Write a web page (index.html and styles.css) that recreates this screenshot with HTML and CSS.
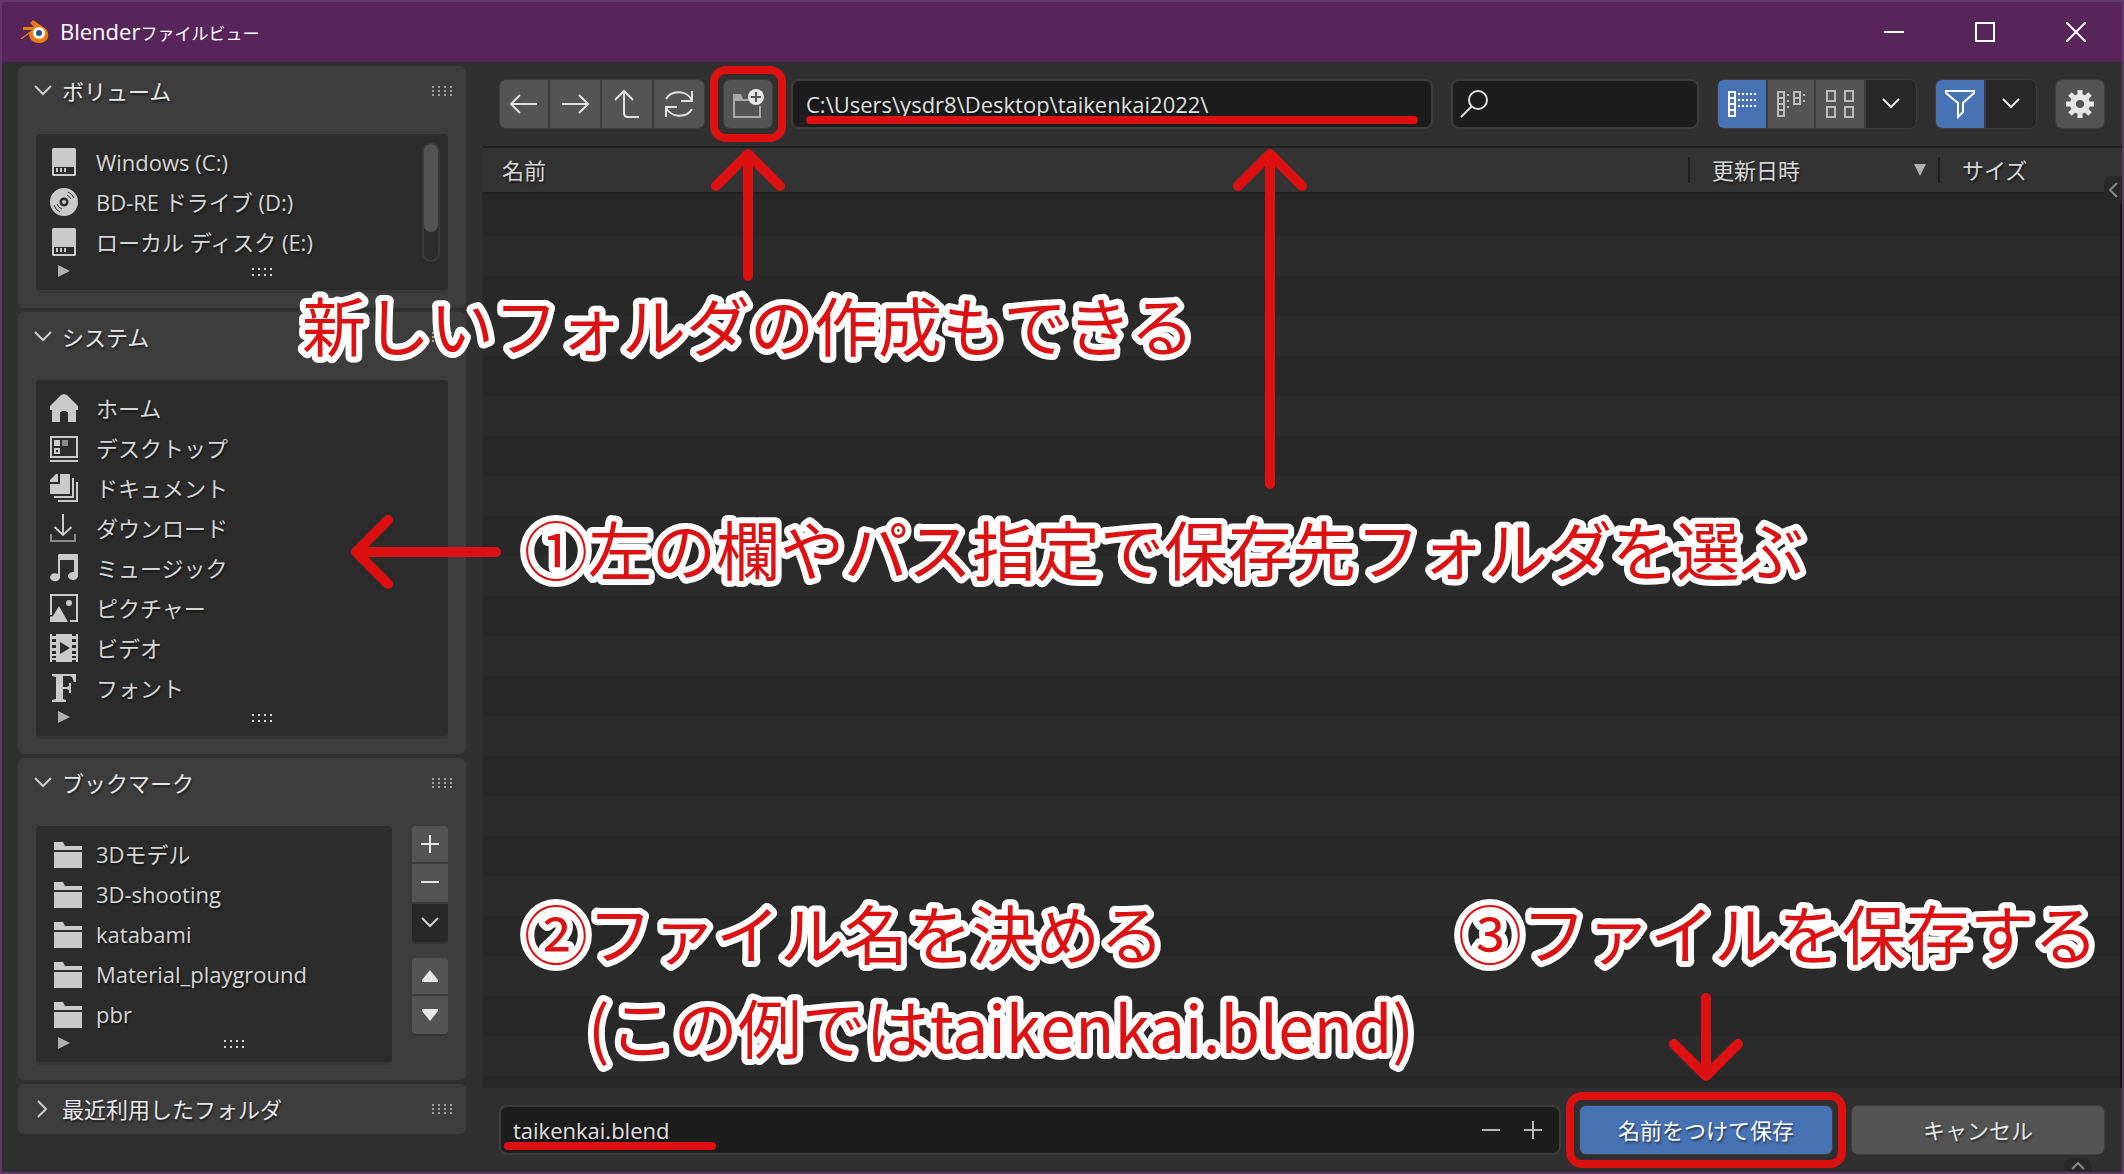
FILE: index.html
```html
<!DOCTYPE html>
<html lang="ja">
<head>
<meta charset="utf-8">
<title>Blenderファイルビュー</title>
<link rel="stylesheet" href="styles.css">
</head>
<body>
<svg class="defs" aria-hidden="true">
  <symbol id="drive" viewBox="0 0 28 28"><path fill-rule="evenodd" d="M3 0h22l1 1v26l-1 1H3l-1-1V1zM4 19v7h20v-7z"/><path d="M6 20h2v4H6zM10 20h2v4h-2zM14 20h2v4h-2z"/></symbol>
  <symbol id="disc" viewBox="0 0 28 28"><path fill-rule="evenodd" d="M14 0a14 14 0 1 1 0 28a14 14 0 0 1 0-28zM14 9.500a4.500 4.500 0 1 0 0 9a4.500 4.500 0 0 0 0-9z"/><circle cx="14" cy="14" r="2"/><path d="M18 4a11 11 0 0 1 6 6M17 7a8 8 0 0 1 4 4M4 17a11 11 0 0 0 6 7M7 16a8 8 0 0 0 5 5" fill="none" stroke="#2c2c2c" stroke-width="1"/></symbol>
  <symbol id="home" viewBox="0 0 28 28"><path d="M14 0l3 1 11 11v4h-2v12h-8V18h-1l-1-1h-4l-1 1h-1v10H2V16H0v-4L11 1z"/></symbol>
  <symbol id="desktop" viewBox="0 0 28 28"><path fill-rule="evenodd" d="M0 2h28v22H0zM2 4v18h24V4zM0 26h28v2H0zM4 6h6v6H4zM4 14h6v6H4zM6 16v2h2v-2z"/><path opacity=".6" d="M12 6h6v6h-6z"/></symbol>
  <symbol id="docs" viewBox="0 0 28 28"><path d="M10 0h10v20H0V10h10zM0 8V6l6-6h2v8zM22 4h2v20H4v-2h18zM26 8h2v20H8v-2h18z"/></symbol>
  <symbol id="download" viewBox="0 0 28 28"><path d="M13 0v21M4.500 13l8.500 8 8.500-8" fill="none" stroke="currentColor" stroke-width="2"/><path opacity=".6" d="M0 20h2v6h22v-6h2v8H0z"/></symbol>
  <symbol id="music" viewBox="0 0 28 28"><path d="M8 1l1-1h19v22a5 4 0 1 1-4-4V6H10v18a5 4 0 1 1-2-4z"/></symbol>
  <symbol id="picture" viewBox="0 0 28 28"><path d="M0 0h28v28h-8v-2h6V2H2v19H0zM0 28v-5l3-1 6-10 9 16z"/><circle cx="19" cy="9" r="3"/></symbol>
  <symbol id="video" viewBox="0 0 28 28"><path fill-rule="evenodd" d="M0 0h2v2h4V0h16v2h4V0h2v28h-2v-2h-4v2H6v-2H2v2H0zM2 5v3h4V5zM2 11v3h4v-3zM2 17v3h4v-3zM2 22v2h4v-2zM22 5v3h4V5zM22 11v3h4v-3zM22 17v3h4v-3zM22 22v2h4v-2zM10 8v12l10-6z"/></symbol>
  <symbol id="font" viewBox="0 0 28 28"><path d="M2 0h24v8h-2l-2-5-2-1h-7v11h4l2-1V9h2v10h-2v-3l-2-1h-4v10l3 1v2H2v-2l4-1V3L2 2z"/></symbol>
  <symbol id="folder" viewBox="0 0 28 28"><path d="M0 2h9l2 4h17v4H0zM0 12h28v16H0z"/></symbol>
  <symbol id="down" viewBox="0 0 18 12"><path d="M1 1l8 8 8-8" fill="none" stroke="currentColor" stroke-width="2"/></symbol>
  <symbol id="play" viewBox="0 0 12 12"><path d="M0 0l12 6-12 6z"/></symbol>
</svg>

<div class="app">
  <header class="titlebar">
    <svg class="logo" viewBox="0 0 30 26"><path fill="#ea7d10" d="M0 20L12 11H3V8h11l-4-4 3-3 13 9a10 10 0 0 1 2 8c-1 4-5 6-9 6-6 0-10-4-10-9l-7 5z"/><circle cx="19" cy="14" r="6" fill="#fff"/><circle cx="19" cy="14" r="3" fill="#265787"/></svg>
    <h1 class="title">Blender<span class="title-kana">ファイルビュー</span></h1>
    <div class="controls">
      <button aria-label="最小化"><svg width="20" height="20"><path d="M0 10h20" stroke="#fff" stroke-width="2"/></svg></button>
      <button aria-label="最大化"><svg width="20" height="20"><path d="M1 1h18v18H1z" fill="none" stroke="#fff" stroke-width="2"/></svg></button>
      <button aria-label="閉じる"><svg width="20" height="20"><path d="M0 0l20 20M20 0L0 20" stroke="#fff" stroke-width="2"/></svg></button>
    </div>
  </header>

  <div class="body">
    <aside class="sidebar">
      <section class="panel">
        <h2 class="panel-head"><button><svg class="chev"><use href="#down"/></svg>ボリューム</button><i class="grip dark"></i></h2>
        <div class="panel-body">
          <div class="list">
            <div class="scroll"><i class="thumb"></i></div>
            <ul>
              <li><button><svg class="ico"><use href="#drive"/></svg>Windows (C:)</button></li>
              <li><button><svg class="ico"><use href="#disc"/></svg>BD-RE ドライブ (D:)</button></li>
              <li><button><svg class="ico"><use href="#drive"/></svg>ローカル ディスク (E:)</button></li>
            </ul>
            <div class="list-foot"><svg class="play"><use href="#play"/></svg><i class="grip"></i></div>
          </div>
        </div>
      </section>

      <section class="panel">
        <h2 class="panel-head"><button><svg class="chev"><use href="#down"/></svg>システム</button><i class="grip dark"></i></h2>
        <div class="panel-body">
          <div class="list">
            <ul>
              <li><button><svg class="ico"><use href="#home"/></svg>ホーム</button></li>
              <li><button><svg class="ico"><use href="#desktop"/></svg>デスクトップ</button></li>
              <li><button><svg class="ico"><use href="#docs"/></svg>ドキュメント</button></li>
              <li><button><svg class="ico"><use href="#download"/></svg>ダウンロード</button></li>
              <li><button><svg class="ico"><use href="#music"/></svg>ミュージック</button></li>
              <li><button><svg class="ico"><use href="#picture"/></svg>ピクチャー</button></li>
              <li><button><svg class="ico"><use href="#video"/></svg>ビデオ</button></li>
              <li><button><svg class="ico"><use href="#font"/></svg>フォント</button></li>
            </ul>
            <div class="list-foot"><svg class="play"><use href="#play"/></svg><i class="grip"></i></div>
          </div>
        </div>
      </section>

      <section class="panel">
        <h2 class="panel-head"><button><svg class="chev"><use href="#down"/></svg>ブックマーク</button><i class="grip dark"></i></h2>
        <div class="panel-body">
          <div class="list folders">
            <ul>
              <li><button><svg class="ico"><use href="#folder"/></svg>3Dモデル</button></li>
              <li><button><svg class="ico"><use href="#folder"/></svg>3D-shooting</button></li>
              <li><button><svg class="ico"><use href="#folder"/></svg>katabami</button></li>
              <li><button><svg class="ico"><use href="#folder"/></svg>Material_playground</button></li>
              <li><button><svg class="ico"><use href="#folder"/></svg>pbr</button></li>
            </ul>
            <div class="list-foot"><svg class="play"><use href="#play"/></svg><i class="grip"></i></div>
          </div>
          <div class="side-buttons">
            <div class="stack">
              <button aria-label="追加"><svg width="18" height="18"><path d="M9 0v18M0 9h18" stroke="#e6e6e6" stroke-width="2"/></svg></button>
              <button aria-label="削除"><svg width="18" height="18"><path d="M0 8h18" stroke="#e6e6e6" stroke-width="2"/></svg></button>
              <button class="menu" aria-label="その他"><svg class="chev"><use href="#down"/></svg></button>
            </div>
            <div class="stack">
              <button aria-label="上へ"><svg width="18" height="12"><path d="M9 0l8 10v2H1v-2z" fill="#e6e6e6"/></svg></button>
              <button aria-label="下へ"><svg width="18" height="12"><path d="M9 12L1 2V0h16v2z" fill="#e6e6e6"/></svg></button>
            </div>
          </div>
        </div>
      </section>

      <section class="panel">
        <h2 class="panel-head"><button><svg class="chev side"><use href="#down"/></svg>最近利用したフォルダ</button><i class="grip dark"></i></h2>
      </section>
    </aside>

    <main class="main">
      <div class="toolbar">
        <div class="group">
          <button aria-label="戻る"><svg width="28" height="20"><path d="M27 10H1M10 1L1 10l9 9" class="line"/></svg></button>
          <button aria-label="進む"><svg width="28" height="20"><path d="M1 10h26M18 1l9 9-9 9" class="line"/></svg></button>
          <button aria-label="親フォルダ"><svg width="26" height="30"><path d="M10 2v22q0 4 4 4h11M1 11l9-9 9 9" class="line"/></svg></button>
          <button aria-label="更新"><svg width="30" height="30"><path d="M2 10A14 12 0 0 1 28 12M28 2v10H17M28 20A14 12 0 0 1 2 18M2 28V18h11" class="line"/></svg></button>
        </div>
        <div class="marked">
          <div class="group single">
            <button aria-label="新規フォルダ"><svg width="32" height="30"><path fill="#a8a8a8" d="M1 5h8l2 5h6v2H3v15h24V17h2v12H1z"/><circle cx="24" cy="8" r="8" fill="#e6e6e6"/><path d="M24 3v10M19 8h10" stroke="#545454" stroke-width="2"/></svg></button>
          </div>
          <i class="ring"></i>
        </div>
        <div class="field path">
          <input type="text" aria-label="パス" value="C:\Users\ysdr8\Desktop\taikenkai2022\">
          <i class="underline"></i>
        </div>
        <label class="field search">
          <svg width="30" height="30"><circle cx="19" cy="11" r="9" class="line"/><path d="M13 17L2 28" class="line"/></svg>
          <input type="search" aria-label="検索">
        </label>
        <div class="group">
          <button class="on" aria-label="縦のリスト"><svg width="30" height="28"><path d="M2 2h6v24H2zM2 8h6M2 14h6M2 20h6" fill="none" stroke="#fff" stroke-width="2"/><path d="M11 4h20M11 10h20M11 16h20" stroke="#fff" stroke-width="2" stroke-dasharray="2 2"/></svg></button>
          <button class="slim" aria-label="横のリスト"><svg width="30" height="28"><path d="M2 2h6v24H2zM2 8h6M2 14h6M2 20h6M18 2h6v12h-6zM18 8h6" fill="none" stroke="#bdbdbd" stroke-width="2"/><path d="M12 4v16M28 4v8" stroke="#bdbdbd" stroke-width="2" stroke-dasharray="2 4"/></svg></button>
          <button aria-label="サムネイル"><svg width="28" height="28"><path d="M1 1h8v10H1zM19 1h8v10h-8zM1 17h8v10H1zM19 17h8v10h-8z" fill="none" stroke="#bdbdbd" stroke-width="2"/></svg></button>
          <button class="menu" aria-label="表示設定"><svg class="chev bold"><use href="#down"/></svg></button>
        </div>
        <div class="group">
          <button class="on" aria-label="フィルター"><svg width="30" height="30"><path d="M1 2h28v2L18 14v9l-5 5V14L1 4z" fill="none" stroke="#fff" stroke-width="2"/></svg></button>
          <button class="menu" aria-label="フィルター設定"><svg class="chev bold"><use href="#down"/></svg></button>
        </div>
        <div class="group single">
          <button aria-label="設定"><svg width="28" height="28" viewBox="-14 -14 28 28"><circle r="7" fill="none" stroke="#e6e6e6" stroke-width="6"/><path d="M0-14V-8M0 14V8M-14 0H-8M14 0H8M-10-10l4 4M10-10l-4 4M-10 10l4-4M10 10l-4-4" stroke="#e6e6e6" stroke-width="5"/></svg></button>
        </div>
      </div>

      <table class="files">
        <thead>
          <tr><th class="col-name">名前</th><th class="col-date"><span class="cell">更新日時<svg class="sort" width="12" height="12"><path d="M0 0h12L6 12z" fill="#b0b0b0"/></svg></span></th><th class="col-size"><span class="cell">サイズ</span></th></tr>
        </thead>
      </table>
      <div class="rows"></div>

      <form class="actions">
        <div class="field name">
          <input type="text" aria-label="ファイル名" value="taikenkai.blend">
          <button type="button" aria-label="番号を減らす"><svg width="18" height="18"><path d="M0 9h18" stroke="#b8b8b8" stroke-width="2"/></svg></button>
          <button type="button" aria-label="番号を増やす"><svg width="18" height="18"><path d="M9 0v18M0 9h18" stroke="#b8b8b8" stroke-width="2"/></svg></button>
          <i class="underline"></i>
        </div>
        <div class="marked">
          <button type="button" class="action primary">名前をつけて保存</button>
          <i class="ring"></i>
        </div>
        <button type="button" class="action">キャンセル</button>
      </form>

      <button class="tab right" aria-label="ツール設定"><svg width="10" height="16"><path d="M9 1L2 8l7 7" fill="none" stroke="#8a8a8a" stroke-width="2"/></svg></button>
      <button class="tab bottom" aria-label="オプション"><svg width="14" height="10"><path d="M1 9l6-6 6 6" fill="none" stroke="#8a8a8a" stroke-width="2"/></svg></button>
    </main>
  </div>

  <div class="notes">
    <svg class="arrow a1" width="76" height="134"><path d="M38 128V6M6 38L38 6l32 32"/></svg>
    <svg class="arrow a2" width="76" height="342"><path d="M38 336V6M6 38L38 6l32 32"/></svg>
    <svg class="arrow a3" width="152" height="76"><path d="M146 38H6M38 6L6 38l32 32"/></svg>
    <svg class="arrow a4" width="76" height="90"><path d="M38 6v78M6 52l32 32 32-32"/></svg>
    <svg class="note n1" width="896" height="94"><text y="69">新しいフォルダの作成もできる</text></svg>
    <svg class="note n2" width="1280" height="94"><text y="69">①左の欄やパス指定で保存先フォルダを選ぶ</text></svg>
    <svg class="note n3" width="896" height="188"><text y="69">②ファイル名を決める</text><text x="64" y="163">(この例ではtaikenkai.blend)</text></svg>
    <svg class="note n4" width="640" height="94"><text y="69">③ファイルを保存する</text></svg>
  </div>
</div>
</body>
</html>
```
FILE: styles.css
```css
* { box-sizing: border-box; }

body {
  margin: 0;
  background: #303030;
  color: #d6d6d6;
  font: 22px/30px "Open Sans", "Noto Sans CJK JP", sans-serif;
}

button, input {
  margin: 0;
  padding: 0;
  border: 0;
  background: none;
  color: inherit;
  font: inherit;
  text-shadow: inherit;
}

button { display: flex; align-items: center; justify-content: center; }
svg { display: block; flex: none; fill: currentColor; }
ul { margin: 0; padding: 0; list-style: none; }
.defs { position: absolute; width: 0; height: 0; }
.line { fill: none; stroke: #e0e0e0; stroke-width: 2; }

.app {
  position: relative;
  display: flex;
  flex-direction: column;
  min-height: 100vh;
  border: 2px solid #62386a;
  text-shadow: 1px 2px 2px rgba(0, 0, 0, .5);
}

/* title bar */
.titlebar {
  display: flex;
  align-items: center;
  height: 60px;
  padding-left: 18px;
  background: #58255b;
  text-shadow: none;
}
.logo { width: 30px; height: 26px; }
.title { flex: 1; margin: 0 0 0 10px; color: #fff; font-size: 22px; font-weight: 400; }
.title-kana { font-size: 17px; }
.controls { display: flex; margin-right: 1px; }
.controls button { width: 91px; height: 60px; }

.body { display: flex; flex: 1; }

/* sidebar */
.sidebar {
  display: flex;
  flex-direction: column;
  gap: 4px;
  width: 480px;
  padding: 4px 16px;
}
.panel { border-radius: 6px; background: #3d3d3d; }
.panel-head {
  display: flex;
  align-items: center;
  justify-content: space-between;
  height: 50px;
  margin: 0;
  padding: 0 14px 0 16px;
  color: #e6e6e6;
  font-size: 22px;
  font-weight: 400;
}
.panel-head button { gap: 10px; }
.chev { width: 18px; height: 12px; color: #cfcfcf; }
.chev.side { transform: rotate(-90deg); }
.chev.bold { color: #e6e6e6; }
.panel-body { display: flex; gap: 20px; padding: 18px; }

.grip {
  width: 20px;
  height: 8px;
  background: repeating-linear-gradient(90deg, #d8d8d8 0 2px, transparent 2px 6px);
  -webkit-mask: repeating-linear-gradient(#000 0 2px, transparent 2px 6px);
  mask: repeating-linear-gradient(#000 0 2px, transparent 2px 6px);
}
.grip.dark {
  height: 10px;
  background: repeating-linear-gradient(90deg, #a0a0a0 0 2px, transparent 2px 6px);
  -webkit-mask: repeating-linear-gradient(#000 0 2px, transparent 2px 4px);
  mask: repeating-linear-gradient(#000 0 2px, transparent 2px 4px);
}

.list {
  position: relative;
  flex: 1;
  padding-top: 8px;
  border-radius: 4px;
  background: #2c2c2c;
  box-shadow: 0 3px #363636;
}
.list li button { gap: 18px; height: 40px; padding-left: 14px; }
.list.folders li button { gap: 14px; padding-left: 18px; }
.ico { width: 28px; height: 28px; color: #cacaca; }
.list-foot { display: flex; height: 28px; padding-left: 22px; }
.play { width: 12px; height: 12px; margin: 3px 6px 0 0; color: #b0b0b0; }
.list-foot .grip { margin: 6px auto 0; }
.scroll {
  position: absolute;
  top: 8px;
  right: 8px;
  bottom: 28px;
  width: 18px;
  border: 2px solid #3a3a3a;
  border-radius: 9px;
}
.thumb { display: block; height: 76%; border-radius: 8px; background: #545454; }

.side-buttons { display: flex; flex-direction: column; gap: 16px; width: 36px; }
.stack {
  display: flex;
  flex-direction: column;
  gap: 2px;
  overflow: hidden;
  border-radius: 4px;
  box-shadow: 0 2px #343434;
}
.stack button { height: 38px; background: #545454; }
.stack button:first-child { height: 36px; }
.stack .menu { background: #282828; }

/* toolbar */
.main {
  position: relative;
  display: flex;
  flex: 1;
  flex-direction: column;
  min-width: 0;
}
.toolbar {
  display: flex;
  align-items: flex-start;
  gap: 18px;
  height: 84px;
  padding: 17px 17px 0;
}
.group {
  display: flex;
  gap: 2px;
  height: 50px;
  overflow: hidden;
  border: 1px solid #3d3d3d;
  border-radius: 7px;
  background: #3d3d3d;
}
.group button { width: 50px; height: 48px; background: #545454; }
.group button:first-child { width: 48px; }
.group .slim { width: 46px; }
.group button.slim + button { width: 48px; }
.group .on { background: #4772b3; }
.group button.menu { width: 50px; background: #282828; }

.marked { position: relative; }
.ring {
  position: absolute;
  inset: -13px;
  border: 8px solid #dd1111;
  border-radius: 16px;
  pointer-events: none;
}

.field {
  position: relative;
  display: flex;
  align-items: center;
  height: 50px;
  border: 2px solid #3d3d3d;
  border-radius: 8px;
  background: #1d1d1d;
  color: #e0e0e0;
}
.field input { flex: 1; width: 0; height: 100%; padding: 0; outline: 0; }
.path { flex: 1; padding-left: 13px; }
.search { width: 248px; padding-left: 6px; }
.underline {
  position: absolute;
  height: 8px;
  border-radius: 4px;
  background: #dd1111;
}
.path .underline { right: 13px; bottom: 3px; left: 13px; }
.name .underline { bottom: 3px; left: 3px; width: 212px; }

.group.single { width: 50px; }

/* file list */
.files {
  width: 100%;
  border-collapse: collapse;
  border-top: 2px solid #1f1f1f;
  border-bottom: 2px solid #1f1f1f;
  background: #333;
  table-layout: fixed;
}
.files th { height: 46px; padding: 0; font-weight: 400; text-align: left; }
.files .col-name { padding-left: 20px; }
.col-date { width: 250px; }
.col-size { width: 184px; }
.cell {
  display: flex;
  align-items: center;
  justify-content: space-between;
  height: 26px;
  padding: 0 12px 0 22px;
  border-left: 2px solid #1f1f1f;
}
.rows {
  flex: 1;
  border-right: 2px solid #111;
  background: repeating-linear-gradient(#282828 0 40px, #2b2b2b 40px 80px) 0 2px;
}

/* bottom bar */
.actions {
  display: flex;
  align-items: flex-start;
  gap: 18px;
  height: 84px;
  padding: 17px 17px 0;
}
.name { flex: 1; padding: 0 5px 0 12px; }
.name button { width: 42px; height: 42px; }
.action {
  width: 254px;
  height: 50px;
  border: 1px solid #3d3d3d;
  border-radius: 7px;
  background: #545454;
  color: #e6e6e6;
}
.action.primary { background: #4772b3; color: #fff; }

.tab { position: absolute; background: #282828; }
.tab.right { top: 114px; right: 0; width: 18px; height: 28px; border-radius: 8px 0 0 8px; }
.tab.bottom { right: 30px; bottom: 0; width: 28px; height: 14px; border-radius: 8px 8px 0 0; }

/* tutorial notes laid over the window */
.notes { position: absolute; inset: 0; pointer-events: none; }
.arrow {
  position: absolute;
  fill: none;
  stroke: #dd1111;
  stroke-width: 10;
  stroke-linecap: round;
  stroke-linejoin: round;
}
.a1 { top: 146px; left: 708px; }
.a2 { top: 146px; left: 1230px; }
.a3 { top: 512px; left: 348px; }
.a4 { right: 378px; bottom: 90px; }
.note {
  position: absolute;
  overflow: visible;
  fill: #dd1111;
  stroke: #fff;
  stroke-width: 12;
  stroke-linejoin: round;
  paint-order: stroke;
  font: 400 64px/94px "Noto Sans CJK JP", sans-serif;
  text-shadow: none;
}
.n1 { top: 280px; left: 300px; }
.n2 { top: 504px; left: 522px; }
.n3 { left: 522px; bottom: 94px; }
.n4 { right: 24px; bottom: 188px; }
```
